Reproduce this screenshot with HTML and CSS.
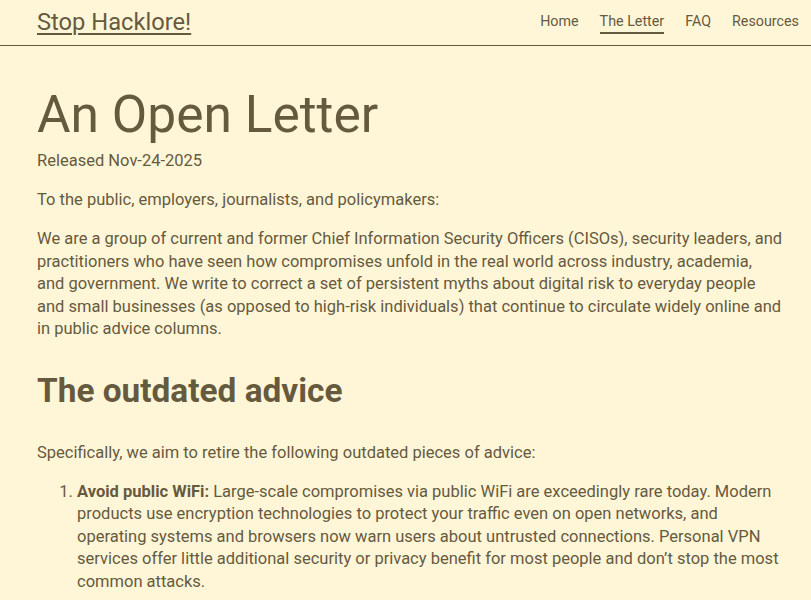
FILE: index.html
```html
<!DOCTYPE html>
<html lang="en">
<head>
<meta charset="utf-8">
<title>Stop Hacklore! - An Open Letter</title>
<link rel="stylesheet" href="styles.css">
</head>
<body>
<header class="site-header">
  <a class="logo" href="#">Stop Hacklore!</a>
  <nav class="nav">
    <a href="#">Home</a>
    <a href="#" class="active">The Letter</a>
    <a href="#">FAQ</a>
    <a href="#">Resources</a>
  </nav>
</header>
<main class="content">
  <h1>An Open Letter</h1>
  <p class="released">Released Nov-24-2025</p>
  <p>To the public, employers, journalists, and policymakers:</p>
  <p>We are a group of current and former Chief Information Security Officers (CISOs), security leaders, and practitioners who have seen how compromises unfold in the real world across industry, academia, and government. We write to correct a set of persistent myths about digital risk to everyday people and small businesses (as opposed to high-risk individuals) that continue to circulate widely online and in public advice columns.</p>
  <h2>The outdated advice</h2>
  <p>Specifically, we aim to retire the following outdated pieces of advice:</p>
  <ol>
    <li><strong>Avoid public WiFi:</strong> Large-scale compromises via public WiFi are exceedingly rare today. Modern products use encryption technologies to protect your traffic even on open networks, and operating systems and browsers now warn users about untrusted connections. Personal VPN services offer little additional security or privacy benefit for most people and don’t stop the most common attacks.</li>
  </ol>
</main>
</body>
</html>
```
FILE: styles.css
```css
html, body {
  margin: 0;
  padding: 0;
}
body {
  background: #fff6d8;
  color: #665a3e;
  font-family: Roboto, "Noto Sans", sans-serif;
  font-size: 16.5px;
  line-height: 22.5px;
}
a {
  color: inherit;
}
.site-header {
  display: flex;
  align-items: center;
  justify-content: space-between;
  height: 45px;
  padding: 0 12px 0 37px;
  border-bottom: 1px solid #665a3e;
}
.logo {
  font-size: 23.7px;
  line-height: 1;
  text-decoration: underline;
  text-decoration-thickness: 2px;
  text-underline-offset: 3px;
}
.nav {
  display: flex;
  gap: 21px;
  font-size: 14.3px;
  line-height: 20px;
}
.nav a {
  text-decoration: none;
  padding-bottom: 1px;
}
.nav a.active {
  border-bottom: 2px solid #665a3e;
}
.content {
  padding: 0 28.5px 0 37px;
}
h1 {
  font-size: 51.5px;
  font-weight: 400;
  line-height: 61px;
  margin: 38px 0 5px;
}
p {
  margin: 0 0 16.5px;
}
h2 {
  font-size: 33.4px;
  font-weight: 700;
  line-height: 40px;
  margin: 30px 0 31px;
}
ol {
  margin: 0;
  padding-left: 40px;
}
li strong {
  font-weight: 700;
}
```
